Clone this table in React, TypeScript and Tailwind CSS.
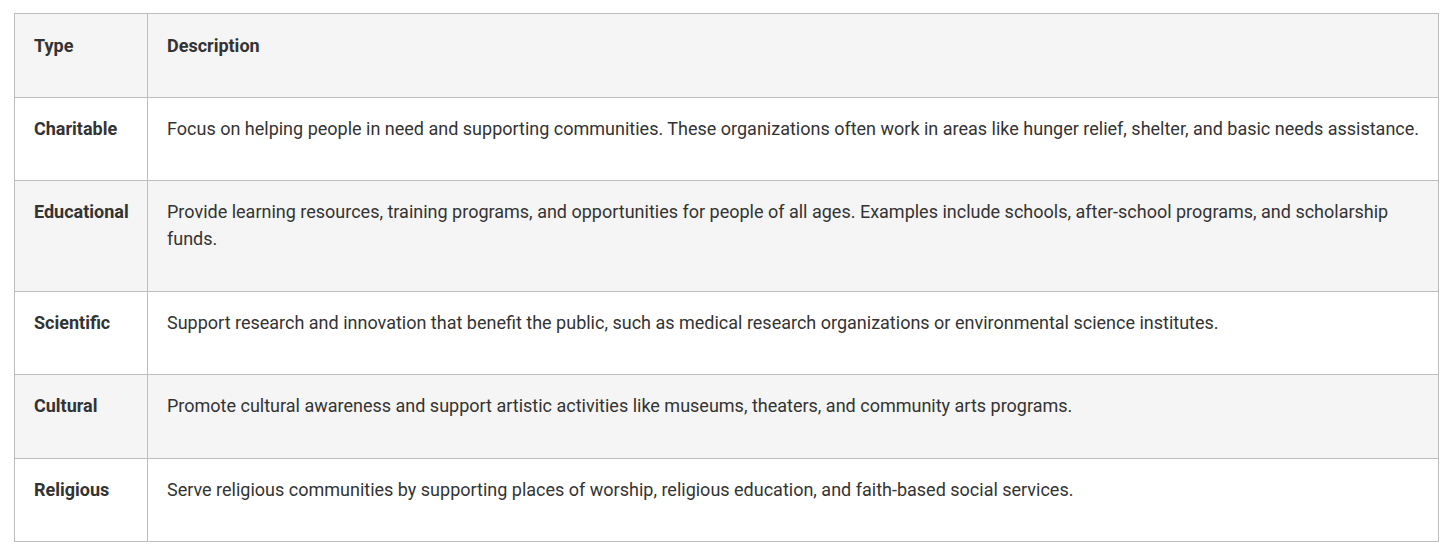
const rows = [
  {
    type: "Charitable",
    description:
      "Focus on helping people in need and supporting communities. These organizations often work in areas like hunger relief, shelter, and basic needs assistance.",
  },
  {
    type: "Educational",
    description:
      "Provide learning resources, training programs, and opportunities for people of all ages. Examples include schools, after-school programs, and scholarship funds.",
  },
  {
    type: "Scientific",
    description:
      "Support research and innovation that benefit the public, such as medical research organizations or environmental science institutes.",
  },
  {
    type: "Cultural",
    description:
      "Promote cultural awareness and support artistic activities like museums, theaters, and community arts programs.",
  },
  {
    type: "Religious",
    description:
      "Serve religious communities by supporting places of worship, religious education, and faith-based social services.",
  },
];

const head = "border border-[#bdbdbd] pl-[19px] pt-[18px] pb-[38px] align-top text-left font-bold";
const cell = "border border-[#bdbdbd] pl-[19px] pt-[17px] pb-[38.4px] align-top";

const App = () => {
  return (
    <div className="min-h-screen bg-white pt-[13px] pl-[14px] pr-[13px] font-['Roboto',sans-serif] text-[18px] leading-[27px] text-[#333333]">
      <table className="w-[1425px] border-collapse table-fixed">
        <colgroup>
          <col className="w-[133px]" />
          <col />
        </colgroup>
        <thead>
          <tr className="bg-[#f5f5f5]">
            <th className={`${head} pr-5`}>Type</th>
            <th className={`${head} pr-[12px]`}>Description</th>
          </tr>
        </thead>
        <tbody>
          {rows.map((row, i) => (
            <tr key={row.type} className={i % 2 === 1 ? "bg-[#f5f5f5]" : "bg-white"}>
              <td className={`${cell} pr-5 font-bold`}>{row.type}</td>
              <td className={`${cell} pr-[12px]`}>{row.description}</td>
            </tr>
          ))}
        </tbody>
      </table>
    </div>
  );
};

export default App;
